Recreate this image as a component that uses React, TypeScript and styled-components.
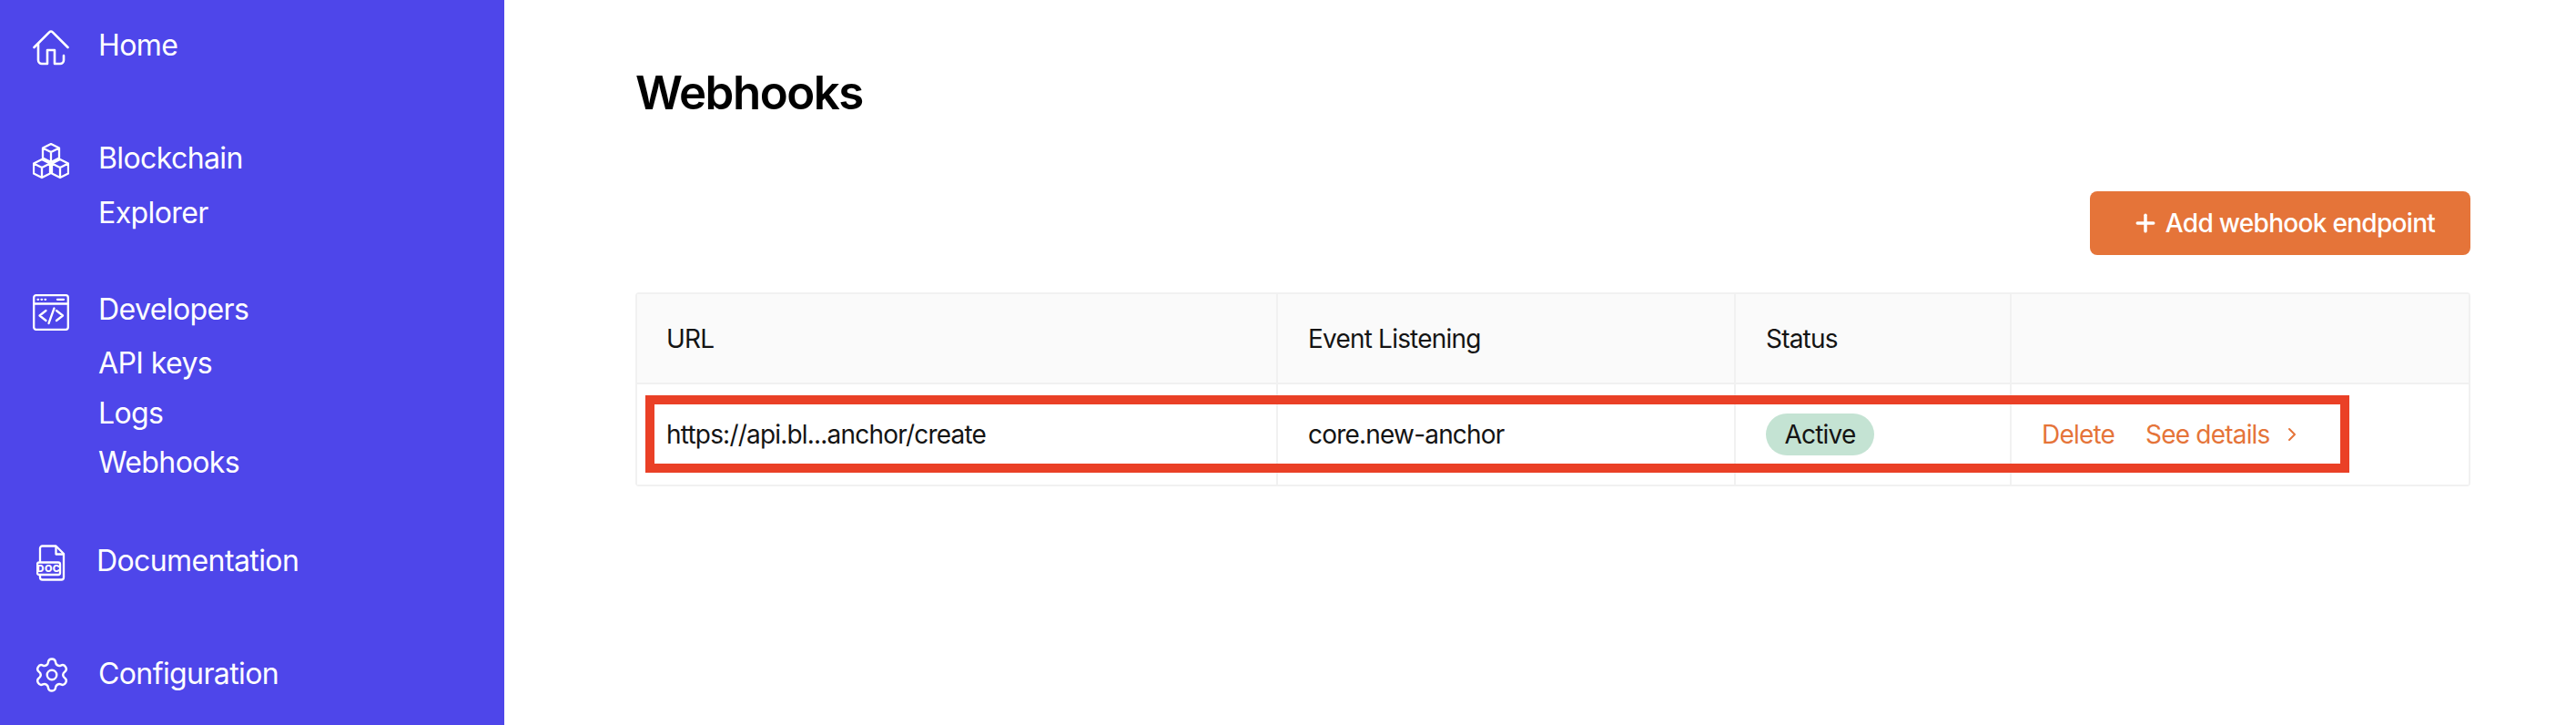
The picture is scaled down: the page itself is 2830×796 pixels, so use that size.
import React from "react";
import styled, { createGlobalStyle } from "styled-components";
import { Settings, Plus, ChevronRight } from "lucide-react";

const GlobalStyle = createGlobalStyle`
  html, body {
    margin: 0;
    padding: 0;
    background: #fff;
    font-family: Inter, "Noto Sans", sans-serif;
  }
  * { box-sizing: border-box; }
`;

const Page = styled.div`
  display: flex;
  width: 2830px;
  height: 796px;
  overflow: hidden;
`;

const Sidebar = styled.aside`
  width: 554px;
  flex-shrink: 0;
  background: #4e46ea;
  color: #fff;
  display: flex;
  flex-direction: column;
`;

const NavGroup = styled.div<{ $top: number }>`
  margin-top: ${({ $top }) => $top}px;
`;

const NavRow = styled.div<{ $offset?: number }>`
  height: 54px;
  display: flex;
  align-items: center;
  margin-top: ${({ $offset }) => $offset ?? 0}px;
  font-size: 32px;
  letter-spacing: -0.6px;
  font-weight: 400;
`;

const IconSlot = styled.span<{ $width?: number; $left?: number; $drop?: number }>`
  width: ${({ $width }) => $width ?? 108}px;
  flex-shrink: 0;
  padding-left: ${({ $left }) => $left ?? 36}px;
  padding-top: ${({ $drop }) => $drop ?? 4}px;
  display: flex;
  align-items: center;
`;

const SubRow = styled(NavRow)`
  padding-left: 108px;
`;

const Main = styled.main`
  flex: 1;
  padding: 0 116px 0 144px;
  display: flex;
  flex-direction: column;
`;

const Title = styled.h1`
  margin: 72px 0 0;
  font-size: 51px;
  line-height: 60px;
  font-weight: 600;
  letter-spacing: -1.5px;
  color: #000;
`;

const Toolbar = styled.div`
  display: flex;
  justify-content: flex-end;
  margin-top: 78px;
`;

const AddButton = styled.button`
  width: 418px;
  height: 70px;
  border: none;
  border-radius: 8px;
  background: #e57439;
  color: #fff;
  display: flex;
  align-items: center;
  justify-content: center;
  gap: 7px;
  padding-left: 13px;
  font: 500 28px Inter, sans-serif;
  letter-spacing: -0.7px;
`;

const Table = styled.div`
  position: relative;
  margin-top: 41px;
  border: 2px solid #f1f1f1;
  border-radius: 4px;
`;

const Row = styled.div<{ $head?: boolean }>`
  display: grid;
  grid-template-columns: 704px 503px 303px 1fr;
  height: ${({ $head }) => ($head ? 99 : 110)}px;
  background: ${({ $head }) => ($head ? "#fafafa" : "#fff")};
  border-bottom: ${({ $head }) => ($head ? "2px solid #f1f1f1" : "none")};
`;

const Cell = styled.div`
  display: flex;
  align-items: center;
  padding-left: 33px;
  border-right: 2px solid #f1f1f1;
  font-size: 28px;
  letter-spacing: -0.8px;
  color: #141414;

  &:first-child {
    padding-left: 32px;
  }

  &:last-child {
    border-right: none;
  }
`;

const Badge = styled.span`
  height: 46px;
  width: 119px;
  border-radius: 23px;
  background: #c4e3d3;
  display: flex;
  align-items: center;
  justify-content: center;
`;

const ActionLink = styled.a<{ $left?: number }>`
  color: #e57439;
  margin-left: ${({ $left }) => $left ?? 0}px;
  display: flex;
  align-items: center;
`;

const Highlight = styled.div`
  position: absolute;
  top: 111px;
  left: 9px;
  width: 1872px;
  height: 85px;
  border: 10px solid #ea4026;
  pointer-events: none;
`;

const HomeIcon = () => (
  <svg width="40" height="40" viewBox="0 0 40 40" fill="none" stroke="#fff" strokeWidth="2.6" strokeLinecap="round" strokeLinejoin="round">
    <path d="M1.5 19 18.4 2.2a2.2 2.2 0 0 1 3.2 0L38.5 19" />
    <path d="M6 15.5V33a4 4 0 0 0 4 4h6V22h8v15h6a4 4 0 0 0 4-4v-5" />
  </svg>
);

const Cube = ({ x, y }: { x: number; y: number }) => (
  <path d={`M${x} ${y}l9 4.5v11l-9 4.5-9-4.5v-11zM${x - 9} ${y + 4.5}l9 4.5 9-4.5M${x} ${y + 9}v11`} />
);

const BlocksIcon = () => (
  <svg width="40" height="40" viewBox="0 0 40 40" fill="none" stroke="#fff" strokeWidth="2.3" strokeLinejoin="round">
    <Cube x={20} y={1} />
    <Cube x={10} y={18} />
    <Cube x={30} y={18} />
  </svg>
);

const DevIcon = () => (
  <svg width="40" height="40" viewBox="0 0 40 40" fill="none" stroke="#fff" strokeWidth="2.3" strokeLinecap="round" strokeLinejoin="round">
    <rect x="1.2" y="1.2" width="37.6" height="37.6" rx="2.5" />
    <path d="M1.2 10.5h37.6" />
    <path d="M5.5 5.8h.6M9.5 5.8h.6M13.5 5.8h.6M27 5.8h7" />
    <path d="M14.5 18l-7 5.5 7 5.5M26 18l7 5.5-7 5.5M23.5 15.5l-6 16.5" />
  </svg>
);

const DocIcon = () => (
  <svg width="32" height="40" viewBox="0 0 32 40" fill="none" stroke="#fff" strokeWidth="2.3" strokeLinejoin="round">
    <path d="M4 20V4a2.5 2.5 0 0 1 2.5-2.5H21.5L30 10v26a2.5 2.5 0 0 1-2.5 2.5h-21A2.5 2.5 0 0 1 4 36v-3" />
    <path d="M21.5 2v8.5H30" />
    <rect x="1" y="19.5" width="25" height="13.5" rx="2" fill="#4e46ea" />
    <text x="13.5" y="30.2" textAnchor="middle" fontFamily="Inter, sans-serif" fontSize="11" fontWeight="800" letterSpacing="0.4" fill="#fff" stroke="none">DOC</text>
  </svg>
);

export default function App() {
  return (
    <>
      <GlobalStyle />
      <Page>
        <Sidebar>
          <NavGroup $top={22}>
            <NavRow>
              <IconSlot $drop={8}><HomeIcon /></IconSlot>
              Home
            </NavRow>
          </NavGroup>
          <NavGroup $top={70}>
            <NavRow>
              <IconSlot $drop={8}><BlocksIcon /></IconSlot>
              Blockchain
            </NavRow>
            <SubRow $offset={6}>Explorer</SubRow>
          </NavGroup>
          <NavGroup $top={52}>
            <NavRow>
              <IconSlot $drop={8}><DevIcon /></IconSlot>
              Developers
            </NavRow>
            <SubRow $offset={5}>API keys</SubRow>
            <SubRow $offset={1}>Logs</SubRow>
            <SubRow>Webhooks</SubRow>
          </NavGroup>
          <NavGroup $top={54}>
            <NavRow>
              <IconSlot $width={106} $left={40} $drop={6}><DocIcon /></IconSlot>
              Documentation
            </NavRow>
          </NavGroup>
          <NavGroup $top={70}>
            <NavRow>
              <IconSlot><Settings size={42} strokeWidth={1.4} color="#fff" /></IconSlot>
              Configuration
            </NavRow>
          </NavGroup>
        </Sidebar>
        <Main>
          <Title>Webhooks</Title>
          <Toolbar>
            <AddButton>
              <Plus size={30} strokeWidth={2.8} />
              Add webhook endpoint
            </AddButton>
          </Toolbar>
          <Table>
            <Row $head>
              <Cell>URL</Cell>
              <Cell>Event Listening</Cell>
              <Cell>Status</Cell>
              <Cell />
            </Row>
            <Row>
              <Cell>https://api.bl...anchor/create</Cell>
              <Cell>core.new-anchor</Cell>
              <Cell><Badge>Active</Badge></Cell>
              <Cell>
                <ActionLink>Delete</ActionLink>
                <ActionLink $left={34}>
                  See details
                  <ChevronRight size={24} strokeWidth={2} style={{ marginLeft: 12 }} />
                </ActionLink>
              </Cell>
            </Row>
            <Highlight />
          </Table>
        </Main>
      </Page>
    </>
  );
}
